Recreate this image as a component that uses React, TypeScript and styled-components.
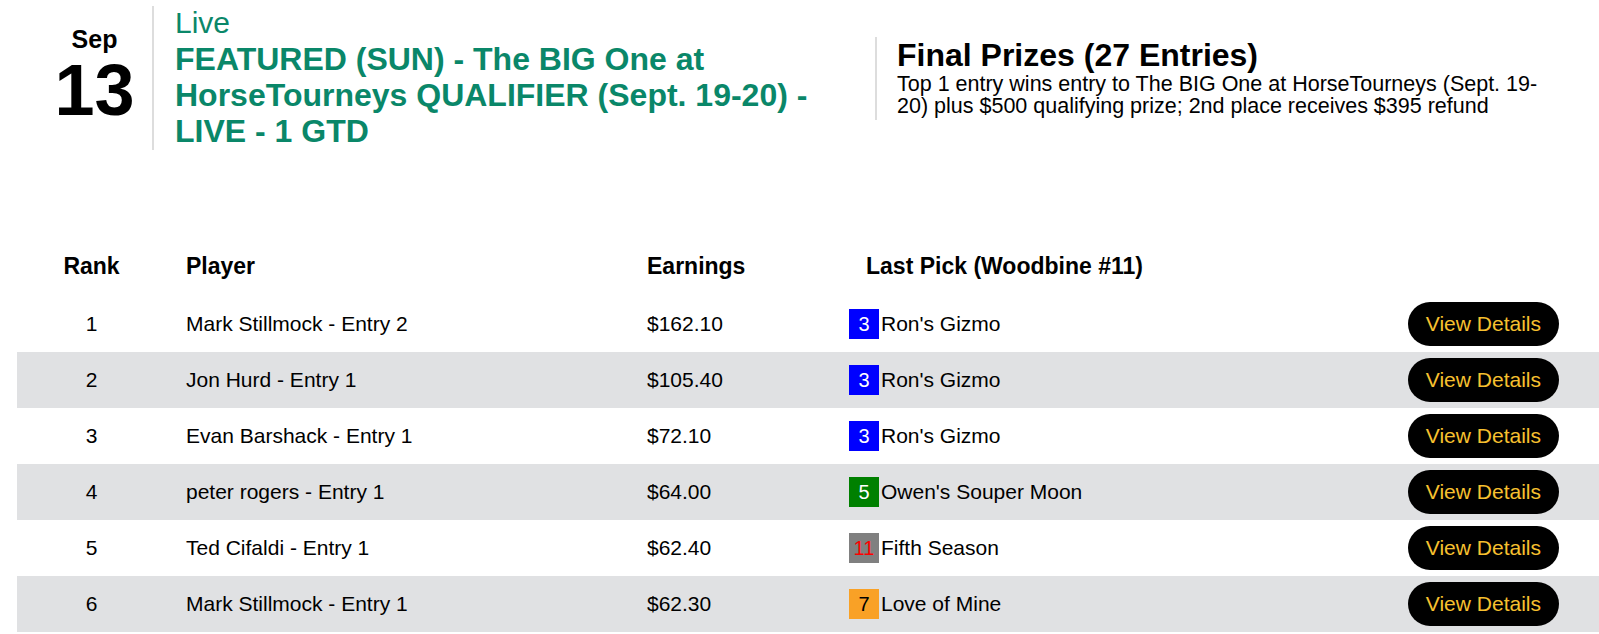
import * as React from 'react';
import styled, { createGlobalStyle } from 'styled-components';

const GREEN = '#0a8769';
const ROW_GRAY = '#e0e1e3';
const DIVIDER = '#dddddd';
const BUTTON_TEXT = '#f7c02f';

const GlobalStyle = createGlobalStyle`
  html, body {
    margin: 0;
    padding: 0;
    background: #ffffff;
    font-family: "Liberation Sans", Arial, Helvetica, sans-serif;
    color: #000000;
    overflow: hidden;
  }
`;

const Page = styled.div`
  width: 1599px;
  height: 634px;
  overflow: hidden;
`;

const Header = styled.div`
  display: flex;
  align-items: center;
  margin-top: 6px;
  padding-left: 37px;
  height: 144px;
`;

const DateBlock = styled.div`
  width: 117px;
  height: 100%;
  border-right: 2px solid ${DIVIDER};
  display: flex;
  flex-direction: column;
  align-items: center;
  padding-top: 19px;
  box-sizing: border-box;
`;

const Month = styled.div`
  font-size: 25px;
  font-weight: bold;
  line-height: 29px;
`;

const Day = styled.div`
  font-size: 72px;
  font-weight: bold;
  line-height: 72px;
`;

const TitleBlock = styled.div`
  width: 660px;
  padding-left: 21px;
  align-self: flex-start;
  color: ${GREEN};
`;

const Status = styled.div`
  font-size: 30px;
  line-height: 34px;
`;

const Title = styled.div`
  font-size: 32px;
  font-weight: bold;
  line-height: 36px;
  margin-top: 1px;
`;

const Prizes = styled.div`
  margin-left: 40px;
  border-left: 2px solid ${DIVIDER};
  padding-left: 20px;
  width: 660px;
`;

const PrizesTitle = styled.div`
  font-size: 32px;
  font-weight: bold;
  line-height: 36px;
`;

const PrizesText = styled.div`
  font-size: 21.5px;
  line-height: 22px;
  padding-bottom: 3px;
`;

const Table = styled.div`
  margin-top: 86px;
  margin-left: 17px;
`;

const Row = styled.div<{ $shaded?: boolean; $head?: boolean }>`
  display: grid;
  grid-template-columns: 149px 461px 202px 1fr auto;
  align-items: center;
  height: ${(p) => (p.$head ? 60 : 56)}px;
  background: ${(p) => (p.$shaded ? ROW_GRAY : 'transparent')};
  font-size: ${(p) => (p.$head ? 23 : 21)}px;
  font-weight: ${(p) => (p.$head ? 'bold' : 'normal')};
`;

const RankCell = styled.div`
  text-align: center;
`;

const Cell = styled.div<{ $indent?: number }>`
  padding-left: ${(p) => p.$indent ?? 20}px;
  display: flex;
  align-items: center;
`;

const ActionCell = styled.div`
  padding-right: 40px;
`;

const Badge = styled.span<{ $bg: string; $fg: string }>`
  display: inline-flex;
  align-items: center;
  justify-content: center;
  width: 30px;
  height: 30px;
  margin-right: 2px;
  background: ${(p) => p.$bg};
  color: ${(p) => p.$fg};
  font-size: 20px;
`;

const DetailsButton = styled.button`
  height: 44px;
  padding: 0 18px;
  border: none;
  border-radius: 22px;
  background: #000000;
  color: ${BUTTON_TEXT};
  font-family: inherit;
  font-size: 21px;
  cursor: pointer;
`;

type Pick = { num: string; bg: string; fg: string; horse: string };

const BLUE3: Pick = { num: '3', bg: '#0000ff', fg: '#ffffff', horse: "Ron's Gizmo" };

const entries: { rank: number; player: string; earnings: string; pick: Pick }[] = [
  { rank: 1, player: 'Mark Stillmock - Entry 2', earnings: '$162.10', pick: BLUE3 },
  { rank: 2, player: 'Jon Hurd - Entry 1', earnings: '$105.40', pick: BLUE3 },
  { rank: 3, player: 'Evan Barshack - Entry 1', earnings: '$72.10', pick: BLUE3 },
  {
    rank: 4,
    player: 'peter rogers - Entry 1',
    earnings: '$64.00',
    pick: { num: '5', bg: '#008000', fg: '#ffffff', horse: "Owen's Souper Moon" },
  },
  {
    rank: 5,
    player: 'Ted Cifaldi - Entry 1',
    earnings: '$62.40',
    pick: { num: '11', bg: '#808080', fg: '#ff0000', horse: 'Fifth Season' },
  },
  {
    rank: 6,
    player: 'Mark Stillmock - Entry 1',
    earnings: '$62.30',
    pick: { num: '7', bg: '#f9a126', fg: '#000000', horse: 'Love of Mine' },
  },
];

const App: React.FC = () => {
  return (
    <Page>
      <GlobalStyle />
      <Header>
        <DateBlock>
          <Month>Sep</Month>
          <Day>13</Day>
        </DateBlock>
        <TitleBlock>
          <Status>Live</Status>
          <Title>
            FEATURED (SUN) - The BIG One at HorseTourneys QUALIFIER (Sept. 19-20) - LIVE - 1 GTD
          </Title>
        </TitleBlock>
        <Prizes>
          <PrizesTitle>Final Prizes (27 Entries)</PrizesTitle>
          <PrizesText>
            Top 1 entry wins entry to The BIG One at HorseTourneys (Sept. 19-20) plus $500
            qualifying prize; 2nd place receives $395 refund
          </PrizesText>
        </Prizes>
      </Header>

      <Table>
        <Row $head>
          <RankCell>Rank</RankCell>
          <Cell>Player</Cell>
          <Cell>Earnings</Cell>
          <Cell $indent={37}>Last Pick (Woodbine #11)</Cell>
          <div />
        </Row>
        {entries.map((e) => (
          <Row key={e.rank} $shaded={e.rank % 2 === 0}>
            <RankCell>{e.rank}</RankCell>
            <Cell>{e.player}</Cell>
            <Cell>{e.earnings}</Cell>
            <Cell>
              <Badge $bg={e.pick.bg} $fg={e.pick.fg}>
                {e.pick.num}
              </Badge>
              {e.pick.horse}
            </Cell>
            <ActionCell>
              <DetailsButton>View Details</DetailsButton>
            </ActionCell>
          </Row>
        ))}
      </Table>
    </Page>
  );
};

export default App;
